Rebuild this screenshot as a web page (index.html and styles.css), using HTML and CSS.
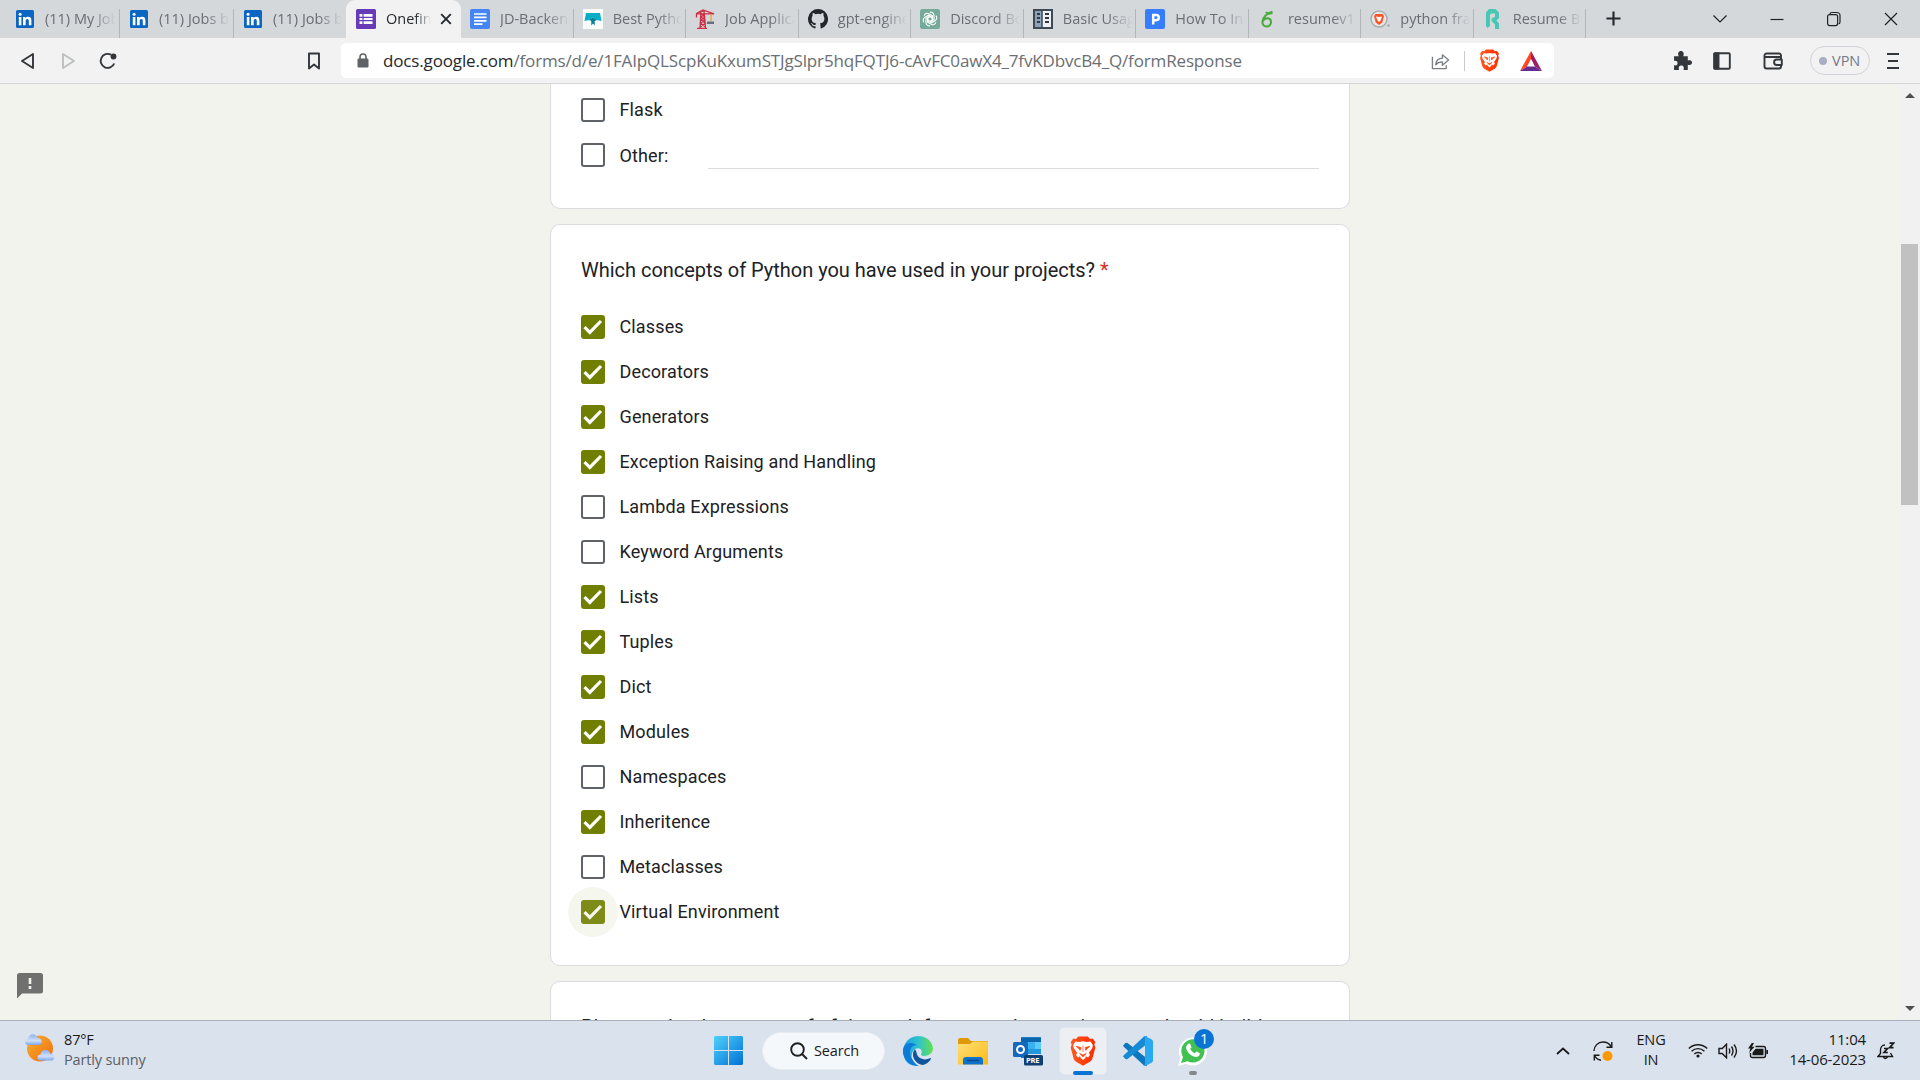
FILE: index.html
```html
<!DOCTYPE html>
<html lang="en">
<head>
<meta charset="utf-8">
<title>Onefin form</title>
<link rel="stylesheet" href="styles.css">
</head>
<body>
<svg width="0" height="0" class="defs">
  <defs>
    <linearGradient id="gWin" x1="0" y1="0" x2="1" y2="1"><stop offset="0" stop-color="#4fd0fb"/><stop offset="1" stop-color="#0072d6"/></linearGradient>
    <linearGradient id="gEdge" x1="0" y1="0" x2="1" y2="0"><stop offset="0" stop-color="#1b9de2"/><stop offset=".5" stop-color="#2dc3cf"/><stop offset="1" stop-color="#66e04d"/></linearGradient>
    <linearGradient id="gSun" x1="0" y1="0" x2="1" y2="1"><stop offset="0" stop-color="#f5b32a"/><stop offset="1" stop-color="#f26a12"/></linearGradient>
    <linearGradient id="gCloud" x1="0" y1="0" x2="0" y2="1"><stop offset="0" stop-color="#8fb4ee"/><stop offset=".6" stop-color="#cfe0fa"/><stop offset="1" stop-color="#7da6ea"/></linearGradient>
    <linearGradient id="gFolder" x1="0" y1="0" x2="1" y2="1"><stop offset="0" stop-color="#ffe07a"/><stop offset="1" stop-color="#fbb916"/></linearGradient>
    <linearGradient id="gBrave" x1="0" y1="0" x2="1" y2="0"><stop offset="0" stop-color="#ff5a1f"/><stop offset="1" stop-color="#ff2a00"/></linearGradient>
    <symbol id="linkedin" viewBox="0 0 20 20"><rect x="1" y="1" width="18" height="18" rx="1.5" fill="#0a66c2"/><path d="M3.8 8h2.6v8.3H3.8zM8 8h2.5v1.2c.5-.9 1.400-1.400 2.700-1.400 2.500 0 3.200 1.600 3.200 4v4.500h-2.600v-4.100c0-1.200-.2-2.200-1.400-2.200s-1.700.9-1.700 2.200v4.100H8z" fill="#fff"/><circle cx="5.100" cy="5.300" r="1.500" fill="#fff"/></symbol>
    <symbol id="lion" viewBox="0 0 24 28"><path d="M7.500.5h9l2 2.300 2.600-.5 2.300 3.200-.8 2.600.9 2.800-2.600 9.600c-.4 1.600-1.300 2.700-2.500 3.600L12 27.800l-6.400-3.700c-1.200-.9-2.100-2-2.500-3.600L.5 10.900l.9-2.800-.8-2.600 2.300-3.200 2.600.5z" fill="url(#gBrave)"/><path d="M12 5l3 .6 4-.4 2.200 3.100-.5 2.900-3.200 4.500 1 2-1.800 2.300-2-1.200-.5 1.700L12 22.500l-2.200-2-.5-1.700-2 1.200-1.800-2.300 1-2-3.200-4.500-.5-2.900L5 5.200l4 .4z" fill="#fff"/><path d="M5.500 9.600l4.600 1.200-.8 2.600-1-1.400zM18.500 9.600l-4.600 1.200.8 2.600 1-1.400zM12 9v6M9 16.300l3 1.500 3-1.500-3 3.200z" fill="url(#gBrave)" stroke="#ff4418" stroke-width=".7"/></symbol>
    <symbol id="tick" viewBox="0 0 24 24"><path d="M3.500 12.200l5.300 5.200L20 6" fill="none" stroke="#fff" stroke-width="3.200"/></symbol>
  </defs>
</svg>

<div class="screen">
<nav class="tabs">
  <div class="tab first"><svg class="fav"><use href="#linkedin"/></svg><span>(11) My Jobs</span></div>
  <div class="tab w114"><svg class="fav"><use href="#linkedin"/></svg><span>(11) Jobs based</span></div>
  <div class="tab beforeactive"><svg class="fav"><use href="#linkedin"/></svg><span>(11) Jobs based</span></div>
  <div class="tab active"><svg class="fav" viewBox="0 0 20 20"><rect width="20" height="20" rx="1.500" fill="#673ab7"/><path d="M3.500 5h13v10h-13z" fill="#fff"/><path d="M7 5v10M3 8.400h14M3 11.700h14" stroke="#673ab7" stroke-width="1.200"/></svg><span>Onefin Inter</span><svg class="close" viewBox="0 0 12 12"><path d="M1.200 1.200l9.600 9.600M10.800 1.200l-9.600 9.600" stroke="#26292d" stroke-width="1.900"/></svg></div>
  <div class="tab w113"><svg class="fav" viewBox="0 0 20 20"><rect width="20" height="20" rx="2" fill="#4385f4"/><path d="M4 5h12.500M4 8.400h12.500M4 11.800h12.500M4 15.200h8.500" stroke="#fff" stroke-width="1.700"/></svg><span>JD-Backend</span></div>
  <div class="tab w112"><svg class="fav" viewBox="0 0 20 20"><rect width="20" height="20" fill="#fafbfb"/><path d="M3 4h14l1.500 8-5-1L10 8.500 6.500 11l-5 1z" fill="#08aec6"/><path d="M6 11l4-2.500 4 2.500-2.300 1v4.500L10 14.500l-1.700 2V12z" fill="#087f96"/></svg><span>Best Python</span></div>
  <div class="tab w113"><svg class="fav" viewBox="0 0 20 20"><path d="M2 19.500h10M5 19L6 2h3l1.500 17M6 5l4 3-4 3 4.500 3-5 4M9.500 5.500L6 8l4 3-4.500 3 5 4M1 4.800h18L8 1 1 4.800M1.500 5v3.500" fill="none" stroke="#cc2e46" stroke-width="1.300"/><path d="M16 5v7" stroke="#f39a2d" stroke-width="1.200"/><path d="M12 12.500h7v2.500h-7z" fill="#66717c"/></svg><span>Job Applicat</span></div>
  <div class="tab w112"><svg class="fav" viewBox="0 0 16 16"><path d="M8 0a8 8 0 0 0-2.530 15.590c.4.070.55-.17.55-.38v-1.490c-2.230.48-2.700-.95-2.700-.95-.36-.92-.89-1.170-.89-1.170-.73-.5.060-.49.060-.49.800.060 1.230.83 1.230.83.710 1.220 1.870.87 2.330.66.070-.52.280-.87.510-1.070-1.780-.2-3.650-.89-3.650-3.950 0-.87.310-1.590.820-2.150-.08-.2-.36-1.020.080-2.120 0 0 .67-.21 2.200.820a7.600 7.600 0 0 1 4 0c1.530-1.040 2.200-.82 2.200-.82.440 1.100.160 1.920.080 2.120.51.560.820 1.270.820 2.150 0 3.070-1.870 3.750-3.650 3.950.290.250.540.730.540 1.480v2.200c0 .21.150.46.550.38A8 8 0 0 0 8 0z" fill="#22272c"/></svg><span>gpt-enginee</span></div>
  <div class="tab w113"><svg class="fav" viewBox="0 0 20 20"><rect width="20" height="20" rx="2.500" fill="#75aa9b"/><g fill="none" stroke="#fff" stroke-width="1.100"><path id="petal" d="M10 3.200a3.300 3.300 0 0 1 4 3.200v4.200L10.500 12.700 7 10.600"/><use href="#petal" transform="rotate(60 10 10)"/><use href="#petal" transform="rotate(120 10 10)"/><use href="#petal" transform="rotate(180 10 10)"/><use href="#petal" transform="rotate(240 10 10)"/><use href="#petal" transform="rotate(300 10 10)"/></g></svg><span>Discord Bot</span></div>
  <div class="tab w112"><svg class="fav" viewBox="0 0 20 20"><path d="M1 1h18v18H1z" fill="#eef2f5" stroke="#3d4a56" stroke-width="2"/><path d="M2 2h7v16H2z" fill="#8ea3b5"/><path d="M9 1v18" stroke="#3d4a56" stroke-width="1.500"/><path d="M4 5h3M4 9h3M4 13h3M12 5h4M12 9h4M12 13h4" stroke="#303a44" stroke-width="2"/></svg><span>Basic Usage</span></div>
  <div class="tab w113"><svg class="fav" viewBox="0 0 20 20"><rect width="20" height="20" rx="2" fill="#377dff"/><path d="M8.200 15.500V6h3a2.600 2.600 0 0 1 0 5.200h-3" fill="none" stroke="#fff" stroke-width="2.500"/></svg><span>How To Inst</span></div>
  <div class="tab w112"><svg class="fav" viewBox="0 0 20 20"><path d="M14.500 2.800C9 4 5 8 4.500 12.500c-.3 3 1.500 5 4 5 2.700 0 4.500-2 4.500-4.500 0-2.300-1.600-3.800-3.700-3.800-1.800 0-3.300 1-4.300 2.600M8 3c1.200 2 3.500 2.500 6.500.5" fill="none" stroke="#4aab3c" stroke-width="2.100"/></svg><span>resumev1</span></div>
  <div class="tab w112"><svg class="fav" viewBox="0 0 20 20"><circle cx="9" cy="10" r="8" fill="#e4e6e8" stroke="#a8abaf" stroke-width="1.500"/><path d="M5.500 5h7l1.500 2-1.700 6.500L9 16l-3.300-2.500L4 7z" fill="#fb542b"/><path d="M6 7.500l3 .5 3-.5-1.500 4L9 13l-1.500-1.500z" fill="#fff"/><circle cx="18.500" cy="16.500" r="1.300" fill="#a8abaf"/></svg><span>python fram</span></div>
  <div class="tab w113"><svg class="fav" viewBox="0 0 20 20"><path d="M3 3.500L6 0h6.500L16 3.500V9l-2.500 2.500 2.500 3V20h-4v-4.500L8.500 12V9.500l3.500-1.800V4.500H8L7 6v11l-2.500 2L3 17z" fill="#47c8b4"/></svg><span>Resume Buil</span></div>
  <svg class="plus" viewBox="0 0 16 16"><path d="M8 .5v15M.5 8h15" stroke="#26292d" stroke-width="2.300"/></svg>
  <div class="winctl">
    <svg width="16" height="16" viewBox="0 0 16 16"><path d="M1.500 4.500L8 11l6.500-6.500"/></svg>
    <svg width="16" height="16" viewBox="0 0 16 16"><path d="M1.500 8.500h13"/></svg>
    <svg width="16" height="16" viewBox="0 0 16 16"><rect x="1.600" y="3.600" width="10" height="11" rx="2"/><path d="M4 3.500c0-1.500 1-2 2-2h4.500c2.500 0 3.500 1.200 3.500 3V11c0 1.300-.7 1.800-1.500 2"/></svg>
    <svg width="16" height="16" viewBox="0 0 16 16"><path d="M2 2l12 12M14 2L2 14"/></svg>
  </div>
</nav>

<header class="toolbar">
  <svg class="back" viewBox="0 0 16 18"><path d="M13 2v14L2 9z"/></svg>
  <svg class="fwd" viewBox="0 0 16 18"><path d="M3 2v14L14 9z"/></svg>
  <svg class="reload" viewBox="0 0 18 18"><path d="M15.200 11.500A7 7 0 1 1 12 2.700"/><circle cx="14.500" cy="4.500" r="2" class="solid"/></svg>
  <svg class="mark" viewBox="0 0 16 18"><path d="M3 1.500h10v15l-5-4-5 4z"/></svg>
  <div class="address">
    <svg class="lock" viewBox="0 0 12 15"><path d="M3 7V4a3 3 0 0 1 6 0v3" fill="none" stroke="#5f6368" stroke-width="1.600"/><rect x=".5" y="5.500" width="11" height="9" rx="1.200" fill="#5f6368"/></svg>
    <div class="url"><b>docs.google.com</b>/forms/d/e/1FAIpQLScpKuKxumSTJgSlpr5hqFQTJ6-cAvFC0awX4_7fvKDbvcB4_Q/formResponse</div>
    <svg class="share" viewBox="0 0 20 20"><path d="M1.500 6v12.500H16V15M5 14.500c.5-5 3.500-7 7-7V4l6.500 5.500L12 15v-3.500c-3 0-5 .5-7 3z"/></svg>
    <i class="bar"></i>
    <svg class="shield" viewBox="0 0 24 28"><use href="#lion"/></svg>
    <svg class="bat" viewBox="0 0 22 20"><path d="M11 0L0 20l7-4.500L11 8z" fill="#ff4724"/><path d="M11 0l11 20-7-4.500L11 8z" fill="#9e1f63"/><path d="M0 20h22l-7-4.500H7z" fill="#662d91"/></svg>
  </div>
  <svg class="puzzle" viewBox="0 0 18 18"><path d="M1 5h4.500C4 2 5.500 0 7.500 0S11 2 9.700 5H14v4c3-1 4 .3 4 2s-1.500 3-4 2v5h-4c.8-3-.3-4.300-2-4.300S4.800 15 5.800 18H1v-4.500c2 .5 3.300-.3 3.300-2S3 9 1 9.500z" fill="#33373b"/></svg>
  <svg class="panel" viewBox="0 0 18 18"><rect x="1.200" y="1.200" width="15.600" height="15.600" rx="1"/><path d="M1.500 1.500h4v15h-4z" class="solid"/></svg>
  <svg class="wallet" viewBox="0 0 20 18"><path d="M18 5V3.500A2 2 0 0 0 16 1.500H3.500a2 2 0 0 0-2 2v11a2 2 0 0 0 2 2H16a2 2 0 0 0 2-2V13M2 5h16v3M18.800 7.500h-5a2.700 2.700 0 0 0 0 5.500h5z"/></svg>
  <div class="vpn"><i></i>VPN</div>
  <svg class="burger" viewBox="0 0 12 18"><path d="M0 2h12M1 9h10M0 16h12"/></svg>
</header>

<main class="page">
  <div class="canvas">
    <section class="card top">
      <label class="opt"><i class="box"></i><span>Flask</span></label>
      <label class="opt"><i class="box"></i><span class="other">Other:</span><i class="line"></i></label>
    </section>
    <section class="card">
      <h2>Which concepts of Python you have used in your projects? <em>*</em></h2>
      <label class="opt"><i class="box on"><svg><use href="#tick"/></svg></i><span>Classes</span></label>
      <label class="opt"><i class="box on"><svg><use href="#tick"/></svg></i><span>Decorators</span></label>
      <label class="opt"><i class="box on"><svg><use href="#tick"/></svg></i><span>Generators</span></label>
      <label class="opt"><i class="box on"><svg><use href="#tick"/></svg></i><span>Exception Raising and Handling</span></label>
      <label class="opt"><i class="box"></i><span>Lambda Expressions</span></label>
      <label class="opt"><i class="box"></i><span>Keyword Arguments</span></label>
      <label class="opt"><i class="box on"><svg><use href="#tick"/></svg></i><span>Lists</span></label>
      <label class="opt"><i class="box on"><svg><use href="#tick"/></svg></i><span>Tuples</span></label>
      <label class="opt"><i class="box on"><svg><use href="#tick"/></svg></i><span>Dict</span></label>
      <label class="opt"><i class="box on"><svg><use href="#tick"/></svg></i><span>Modules</span></label>
      <label class="opt"><i class="box"></i><span>Namespaces</span></label>
      <label class="opt"><i class="box on"><svg><use href="#tick"/></svg></i><span>Inheritence</span></label>
      <label class="opt"><i class="box"></i><span>Metaclasses</span></label>
      <label class="opt"><i class="box on focus"><svg><use href="#tick"/></svg></i><span>Virtual Environment</span></label>
    </section>
    <section class="card next"><h2>Please upload some proof of the work from a python project you should build</h2></section>
  </div>
  <svg class="report" viewBox="0 0 26 26"><path d="M2.500 0h21A2.500 2.500 0 0 1 26 2.500v15.500a2.500 2.500 0 0 1-2.500 2.500H5L0 25.500v-23A2.500 2.500 0 0 1 2.500 0z" fill="#70716e"/><path d="M13 5v6M13 13v3" stroke="#f2f3ed" stroke-width="2.600"/></svg>
  <div class="scroll"><svg viewBox="0 0 10 5"><path d="M0 5l5-5 5 5z"/></svg><i></i><svg viewBox="0 0 10 5"><path d="M0 0l5 5 5-5z"/></svg></div>
</main>

<footer class="taskbar">
  <div class="weather">
    <svg width="30" height="28" viewBox="0 0 30 28"><circle cx="15" cy="14.500" r="13" fill="url(#gSun)"/><path d="M3 11a3 3 0 0 1 0-6C4-1 11-1 12.500 4c4-.5 6 5 2 7z" fill="url(#gCloud)"/><path d="M15.500 26.500a3 3 0 0 1 0-6c1-6 8-6 9.500-1 4.500-.5 6 5 2.500 7z" fill="url(#gCloud)"/></svg>
    <div>87°F<br><small>Partly sunny</small></div>
  </div>
  <div class="apps">
    <svg class="start" viewBox="0 0 29 29"><path d="M1 0h13v14H0V1zM15 0h13l1 1v13H15zM0 15h14v14H1l-1-1zM15 15h14v13l-1 1H15z" fill="url(#gWin)"/></svg>
    <div class="search"><svg width="18" height="18" viewBox="0 0 18 18"><circle cx="7.500" cy="7.500" r="6.300"/><path d="M12 12l5 5"/></svg>Search</div>
    <svg class="app" viewBox="0 0 30 30"><path d="M15 0a15 15 0 0 0-14 20C2 27 8 30 15 30c-6-3-8-10-5-15 2-3 7-4 8.500-.5 1.200 2-.8 3.500-.3 4.500C20 21 30 20 30 12 29 4 22 0 15 0z" fill="url(#gEdge)"/><path d="M0 14C1 7 8 5 14 9c-7 0-9 8-5 14 2 3 4 6 7 7A15 15 0 0 1 0 14z" fill="#0d7bd8"/><path d="M12 13c-5 6 0 15 8 16 4-1 6-3 8-6 .5-1-.3-1-1-.7-6 2.700-13 .2-13.500-6z" fill="#0f559c"/></svg>
    <svg class="app" viewBox="0 0 30 30"><path d="M0 4q0-2 2-2h8l3 3h17v6H0z" fill="#dd9a09"/><path d="M0 8h12l3-2.500h15v23H0z" fill="url(#gFolder)"/><path d="M5 28.500V24q0-3 3-3h14q3 0 3 3v4.500z" fill="#0f73cb"/><path d="M9 24.500h12" stroke="#084b91" stroke-width="1.600"/></svg>
    <svg class="app" viewBox="0 0 30 30"><path d="M8 2q0-1 1-1h18q1 0 1 1v16H8z" fill="#2197e0"/><path d="M8 1.500h20V6H8z" fill="#0f65ad"/><path d="M15 6h7v7h-7z" fill="#38b3ef"/><path d="M22 6h6v7h-6z" fill="#5acbfb"/><path d="M8 14l10 8H8z" fill="#1479cf"/><rect y="6" width="15" height="15" rx="1.500" fill="#1468bd"/><circle cx="7.500" cy="13.500" r="3.500" fill="none" stroke="#fff" stroke-width="2"/><rect x="11" y="19" width="19" height="10.500" rx="1.500" fill="#103f73"/><text x="13" y="27.200" class="pre">PRE</text></svg>
    <div class="tile"><svg width="26" height="30"><use href="#lion"/></svg><i></i></div>
    <svg class="app" viewBox="0 0 30 30"><path d="M1 11l-1-1.500L2.500 7q1-.5 2 0L24 22.500V30l-3-.5z" fill="#0d76bd"/><path d="M1 19l-1 1.500L2.500 23q1 .5 2 0L24 8V0l-3 .5z" fill="#178ad4"/><path d="M22 0l7 3.500 1 1.500v20l-1 1.500-7 3.500-1.500-.7 1.500-.8V1.500L20.500.7z" fill="#29a9f1"/></svg>
    <div class="chat"><svg width="32" height="32" viewBox="0 0 32 32"><path d="M1 31l2.500-8A14 14 0 1 1 9 28.700z" fill="#fff"/><path d="M4 28l2-6A11.600 11.600 0 1 1 10.500 26.200z" fill="#42c153"/><path d="M10.500 9.500c1-1.500 2.500-1.200 3 .2l1 2.500-1.300 1.800c1 2 2.400 3.300 4.500 4.200l1.700-1.700 3.200 1.500c1 3-2.500 4.500-5 3.800-4-1-8-5-8.500-9 0-1.500.5-2.500 1.400-3.300z" fill="#fff"/></svg><b>1</b><i></i></div>
  </div>
  <div class="tray">
    <svg class="up" viewBox="0 0 14 8"><path d="M1 7l6-5.500L13 7"/></svg>
    <svg class="sync" viewBox="0 0 20 20"><path d="M1 10C1 5 5 1 10 1c3.500 0 6.500 1.800 8.300 4.700M18.800 1v5.200h-5.300M1.300 19.500v-5.200h5.200M1.500 14.500c1.300 2.500 3.500 4.200 6.500 4.800"/><circle cx="14.500" cy="15" r="5" class="alert"/></svg>
    <div class="lang">ENG<br>IN</div>
    <svg class="wifi" viewBox="0 0 20 15"><path d="M.8 5.500a13 13 0 0 1 18.400 0M3.600 8.300a9 9 0 0 1 12.800 0M6.300 11a5.200 5.200 0 0 1 7.400 0"/><circle cx="10" cy="13" r="1.600" class="dark"/></svg>
    <svg class="sound" viewBox="0 0 20 16"><path d="M1 5.500h3.200L8.500 1.200v13.600L4.200 10.500H1zM11 5.500q1.500 2.500 0 5M13.500 3.500q3 4.500 0 9M16 1.500q5 6.500 0 13"/></svg>
    <svg class="power" viewBox="0 0 20 16"><path d="M7.500 3.500h8q2 0 2 2v7q0 2-2 2h-11q-2 0-2-2V10"/><path d="M4.500 9.500L7.500 5.800h8v6.500h-11zM18.300 7H20v4h-1.700zM3.800 0L0 5.500h2.300L1.200 10 6.500 3.700H4L6 0z" class="dark"/></svg>
    <div class="clock">11:04<br>14-06-2023</div>
    <svg class="bell" viewBox="0 0 18 18"><path d="M8 3C5 3 3.500 5.500 3.500 8v3.500L1 14.500h14.500l-2-3.500M6.500 15q1.500 3 4 0"/><path d="M7 6.500h3.500L7 10.500h3.800M12.500 1.200h4l-4 4.500h4" stroke-width="1.700"/></svg>
  </div>
</footer>
</div>
</body>
</html>
```

FILE: styles.css
```css
* { box-sizing: border-box; }
body { margin: 0; overflow: hidden; font-family: "Open Sans", sans-serif; }
svg { flex: none; display: block; }
i, em { font-style: normal; }
.defs { position: absolute; }
.screen { width: 1920px; height: 1080px; display: flex; flex-direction: column; }

.tabs { height: 38px; flex: none; display: flex; background: #d5d8db; font-size: 14.5px; color: #6a6e73; }
.tab { display: flex; align-items: center; gap: 10px; padding-left: 9px; flex: none; background: linear-gradient(#b3b6b9, #b3b6b9) right 9px / 1px 100% no-repeat; }
.tab span { flex: 1; overflow: hidden; white-space: nowrap; margin-right: 4px; line-height: 37px; height: 38px; mask-image: linear-gradient(90deg, #000 65%, transparent 100%); }
.fav { width: 20px; height: 20px; }
.first { width: 120px; padding-left: 15px; }
.w112 { width: 112.400px; }
.w113 { width: 112.700px; }
.w114 { width: 114px; }
.beforeactive { width: 112px; background: none; }
.tab.active { width: 115px; padding-left: 10px; background: #f2f2f2; border-radius: 9px 9px 0 0; color: #25282b; }
.active span { margin-right: -1px; }
.active .close { width: 12px; height: 12px; margin-right: 9px; }
.plus { width: 15px; height: 15px; margin: 11px 0 0 20px; }
.winctl { display: flex; gap: 41px; margin: 11px 21px 0 auto; }
.winctl svg { fill: none; stroke: #202224; stroke-width: 1.200; }

.toolbar { height: 46px; flex: none; display: flex; align-items: center; background: #f2f2f2; border-bottom: 1px solid #d5d7db; padding: 0 21px 0 20px; }
.toolbar svg { fill: none; stroke: #33373b; stroke-width: 1.900; stroke-linejoin: round; }
.toolbar svg .solid { fill: #33373b; }
.back, .fwd, .mark { width: 16px; height: 18px; }
.fwd { margin-left: 24px; }
.toolbar .fwd { stroke: #bcbec0; }
.reload { width: 18px; height: 18px; margin-left: 23px; }
.mark { margin-left: 189px; }
.address { width: 1213px; height: 35px; margin-left: 19px; background: #fff; border-radius: 5px; display: flex; align-items: center; flex: none; padding: 0 12px 0 16px; }
.toolbar .lock, .toolbar .shield, .toolbar .bat, .toolbar .puzzle { stroke: none; }
.lock { width: 12px; height: 15px; }
.url { margin-left: 14px; width: 1046px; white-space: nowrap; font-size: 17px; letter-spacing: -.15px; color: #6b6e72; line-height: 34px; }
.url b { font-weight: 400; color: #25282b; }
.toolbar .share { width: 19px; height: 19px; stroke: #7b7e82; stroke-width: 1.400; margin-left: 2px; }
.bar { width: 1px; height: 20px; background: #c8cacc; margin: 0 14px; }
.shield { width: 21px; height: 23px; }
.bat { width: 22px; height: 20px; margin: 0 0 0 20px; }
.puzzle { width: 19px; height: 19px; margin-left: 119px; }
.panel { width: 18px; height: 18px; margin-left: 21px; }
.wallet { width: 20px; height: 18px; margin-left: 32px; }
.vpn { width: 60px; height: 29px; border: 1px solid #cfd2d8; border-radius: 15px; margin-left: 27px; display: flex; align-items: center; padding-left: 8px; font-size: 14.5px; color: #74798a; }
.vpn i { width: 8px; height: 8px; border-radius: 50%; background: #abaec2; margin-right: 5px; }
.burger { width: 12px; height: 18px; margin-left: 17px; }

.page { height: 936px; flex: none; position: relative; display: flex; background: #f2f3ed; overflow: hidden; }
.canvas { width: 1900px; display: flex; flex-direction: column; align-items: center; gap: 15px; font-family: Roboto, sans-serif; }
.card { width: 800px; flex: none; background: #fff; border: 1px solid #dadce0; border-radius: 10px; padding: 30px 30px 31px; display: flex; flex-direction: column; gap: 1px; }
.card.top { height: 125px; padding-top: 4px; border-top: 0; border-radius: 0 0 10px 10px; }
.card.next { height: 100px; white-space: nowrap; }
.card h2 { margin: 0 0 19px; font-size: 20px; font-weight: 400; line-height: 30px; letter-spacing: -.02px; color: #202124; }
.card h2 em { color: #d93025; }
.opt { height: 44px; display: flex; align-items: center; font-size: 18px; letter-spacing: .14px; color: #202124; }
.opt span { margin: 0 0 2px -.5px; }
.box { width: 24px; height: 24px; border: 2.500px solid #5f6368; border-radius: 3px; margin-right: 15px; flex: none; }
.box.on { border: 0; background: #707f00; }
.box svg { width: 24px; height: 24px; }
.box.focus { background: #7f8c1a; position: relative; }
.box.focus::before { content: ""; position: absolute; inset: -13px; border-radius: 50%; background: #707f00; opacity: .07; }
.opt .other { width: 88.500px; margin-bottom: 0; }
.line { flex: 1; height: 1px; background: #dadce0; margin-top: 27px; }
.report { position: absolute; left: 17px; top: 889px; width: 26px; height: 26px; }
.scroll { width: 20px; background: #f1f1f1; display: flex; flex-direction: column; align-items: center; padding: 9px 1px 9px 0; }
.scroll svg { width: 10px; height: 5px; fill: #505050; }
.scroll i { width: 17px; height: 261px; background: #c1c1c1; margin: 146px 0 auto; }

.taskbar { height: 60px; flex: none; border-top: 1px solid #a9b0b9; background: #dae2ed; display: grid; grid-template-columns: 714px 1fr 364px; color: #1a1a1a; font-size: 14.5px; line-height: 20px; letter-spacing: -.15px; }
.weather { display: flex; align-items: flex-start; padding: 9px 0 0 25px; gap: 9px; }
.weather svg { margin-top: 4px; }
.weather small { font-size: 14.5px; color: #5a6067; }
.apps { display: flex; align-items: center; }
.start { width: 29px; height: 29px; }
.search { width: 123px; height: 38px; border-radius: 19px; background: #f5f8fb; border: 1px solid #e7ecf2; margin: 0 18px 0 19px; display: flex; align-items: center; gap: 6px; padding-left: 27px; }
.search svg { fill: none; stroke: #202020; stroke-width: 1.900; }
.app { width: 30px; height: 30px; margin-right: 25px; }
.pre { font: bold 7.500px "Open Sans", sans-serif; fill: #fff; }
.tile { width: 48px; height: 48px; margin: 0 16px 0 -9px; background: #ecf0f5; border: 1px solid #e2e7ee; border-radius: 5px; display: flex; align-items: center; justify-content: center; position: relative; }
.tile i { position: absolute; left: 13px; bottom: -1px; width: 20px; height: 4px; border-radius: 2px; background: #0a74d4; }
.chat { position: relative; width: 32px; height: 32px; margin-left: -1px; }
.chat b { position: absolute; left: 17px; top: -6px; width: 20px; height: 20px; border-radius: 50%; background: #0a74d4; color: #fff; font-weight: 400; text-align: center; }
.chat i { position: absolute; left: 12px; bottom: -8px; width: 8px; height: 4px; border-radius: 2px; background: #85898e; }
.tray { display: flex; align-items: center; }
.tray svg { fill: none; stroke: #1a1a1a; stroke-width: 1.400; }
.tray svg .dark { fill: #1a1a1a; stroke: none; }
.tray svg .alert { fill: #ff9800; stroke: none; }
.tray .up { width: 14px; height: 8px; stroke-width: 1.800; }
.sync { width: 20px; height: 20px; margin-left: 23px; }
.lang { width: 36px; margin: 0 0 1px 20px; text-align: center; }
.wifi { width: 20px; height: 15px; margin-left: 19px; }
.sound { width: 20px; height: 16px; margin-left: 10px; }
.power { width: 20px; height: 16px; margin-left: 10px; }
.clock { width: 90px; margin: 0 0 3px 8px; text-align: right; font-size: 15px; }
.bell { width: 18px; height: 18px; margin-left: 11px; }
```
